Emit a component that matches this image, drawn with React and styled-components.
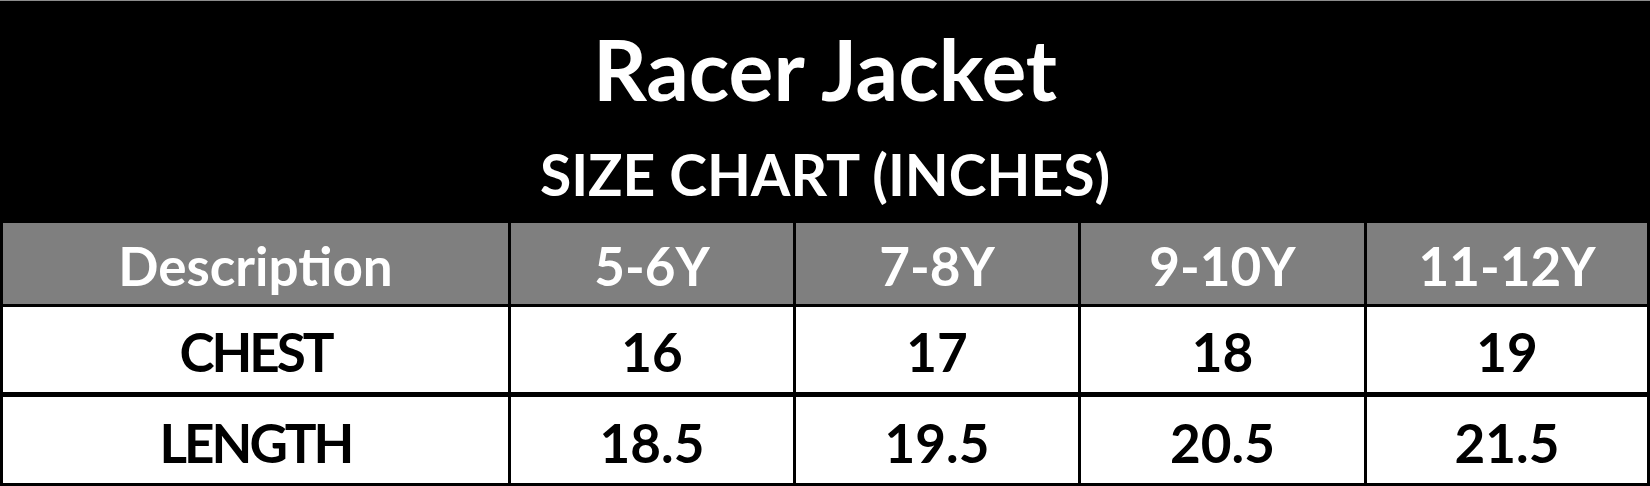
import styled, { createGlobalStyle } from 'styled-components';

const GlobalStyle = createGlobalStyle`
  html, body {
    margin: 0;
    padding: 0;
    background: #ffffff;
  }
`;

const Chart = styled.section`
  width: 1650px;
  height: 486px;
  box-sizing: border-box;
  border-top: 1px solid #8c8c8c;
  background: #000000;
  font-family: Lato, 'Open Sans', sans-serif;
  font-weight: 700;
  display: flex;
  flex-direction: column;
`;

const TitleBlock = styled.header`
  height: 222px;
  display: flex;
  flex-direction: column;
  align-items: center;
  color: #ffffff;
`;

const Title = styled.h1`
  margin: 18px 0 0;
  font-size: 84px;
  line-height: 100px;
  font-weight: 700;
`;

const Subtitle = styled.h2`
  margin: 20px 0 0;
  font-size: 57px;
  line-height: 70px;
  font-weight: 700;
`;

const Row = styled.div`
  display: grid;
  grid-template-columns: 505px 282px 282px 283px 280px;
  column-gap: 3px;
  padding: 0 3px;
  height: ${(p) => p.$height}px;
  margin-bottom: ${(p) => p.$gap}px;
`;

const Cell = styled.div`
  display: flex;
  align-items: center;
  justify-content: center;
  background: ${(p) => (p.$head ? '#7f7f7f' : '#ffffff')};
  color: ${(p) => (p.$head ? '#ffffff' : '#000000')};
  font-size: 53px;
  line-height: 1;
  padding-top: 4px;
  box-sizing: border-box;
`;

const Label = styled(Cell)`
  letter-spacing: -3px;
`;

const headers = ['Description', '5-6Y', '7-8Y', '9-10Y', '11-12Y'];

const rows = [
  { label: 'CHEST', values: ['16', '17', '18', '19'], height: 85, gap: 5 },
  { label: 'LENGTH', values: ['18.5', '19.5', '20.5', '21.5'], height: 86, gap: 3 },
];

function App() {
  return (
    <>
      <GlobalStyle />
      <Chart>
        <TitleBlock>
          <Title>Racer Jacket</Title>
          <Subtitle>SIZE CHART (INCHES)</Subtitle>
        </TitleBlock>
        <Row $height={81} $gap={3}>
          {headers.map((h) => (
            <Cell key={h} $head>
              {h}
            </Cell>
          ))}
        </Row>
        {rows.map((row) => (
          <Row key={row.label} $height={row.height} $gap={row.gap}>
            <Label>{row.label}</Label>
            {row.values.map((v) => (
              <Cell key={v}>{v}</Cell>
            ))}
          </Row>
        ))}
      </Chart>
    </>
  );
}

export default App;
